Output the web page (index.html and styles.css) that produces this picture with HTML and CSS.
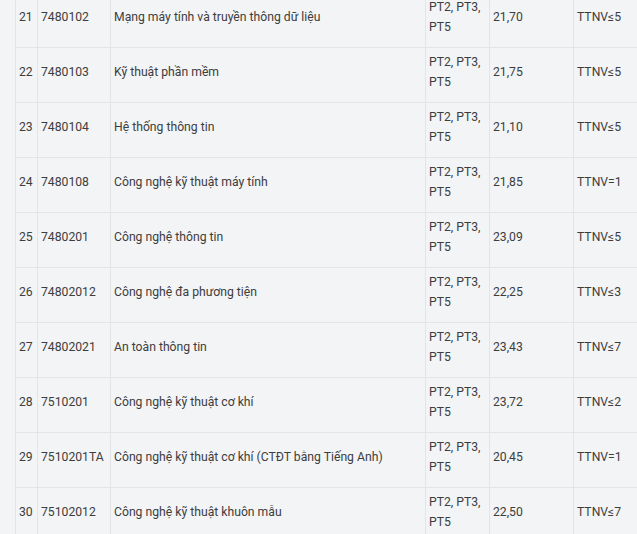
FILE: index.html
```
<!DOCTYPE html>
<html lang="vi">
<head>
<meta charset="utf-8">
<link rel="stylesheet" href="styles.css">
</head>
<body>
<div class="wrap">
<table class="scores">
<colgroup>
<col class="c-no"><col class="c-code"><col class="c-name"><col class="c-pt"><col class="c-score"><col class="c-tt">
</colgroup>
<tbody>
<tr><td>21</td><td>7480102</td><td>Mạng máy tính và truyền thông dữ liệu</td><td>PT2, PT3, PT5</td><td>21,70</td><td>TTNV≤5</td></tr>
<tr><td>22</td><td>7480103</td><td>Kỹ thuật phần mềm</td><td>PT2, PT3, PT5</td><td>21,75</td><td>TTNV≤5</td></tr>
<tr><td>23</td><td>7480104</td><td>Hệ thống thông tin</td><td>PT2, PT3, PT5</td><td>21,10</td><td>TTNV≤5</td></tr>
<tr><td>24</td><td>7480108</td><td>Công nghệ kỹ thuật máy tính</td><td>PT2, PT3, PT5</td><td>21,85</td><td>TTNV=1</td></tr>
<tr><td>25</td><td>7480201</td><td>Công nghệ thông tin</td><td>PT2, PT3, PT5</td><td>23,09</td><td>TTNV≤5</td></tr>
<tr><td>26</td><td>74802012</td><td>Công nghệ đa phương tiện</td><td>PT2, PT3, PT5</td><td>22,25</td><td>TTNV≤3</td></tr>
<tr><td>27</td><td>74802021</td><td>An toàn thông tin</td><td>PT2, PT3, PT5</td><td>23,43</td><td>TTNV≤7</td></tr>
<tr><td>28</td><td>7510201</td><td>Công nghệ kỹ thuật cơ khí</td><td>PT2, PT3, PT5</td><td>23,72</td><td>TTNV≤2</td></tr>
<tr><td>29</td><td>7510201TA</td><td>Công nghệ kỹ thuật cơ khí (CTĐT bằng Tiếng Anh)</td><td>PT2, PT3, PT5</td><td>20,45</td><td>TTNV=1</td></tr>
<tr><td>30</td><td>75102012</td><td>Công nghệ kỹ thuật khuôn mẫu</td><td>PT2, PT3, PT5</td><td>22,50</td><td>TTNV≤7</td></tr>
</tbody>
</table>
</div>
</body>
</html>
```
FILE: styles.css
```
html, body {
  margin: 0;
  padding: 0;
  background: #f3f4f6;
}
body {
  font-family: Roboto, "Noto Sans", sans-serif;
  color: #3d3d3d;
  font-size: 12.2px;
  overflow: hidden;
}
.wrap {
  padding-left: 15px;
  margin-top: -8px;
}
.scores {
  border-collapse: collapse;
  table-layout: fixed;
  width: 660px;
}
.c-no { width: 22px; }
.c-code { width: 73px; }
.c-name { width: 315px; }
.c-pt { width: 64px; }
.c-score { width: 84px; }
.c-tt { width: 102px; }
.scores td {
  border: 1px solid #e2e4e8;
  padding: 4px 3px 10px 3px;
  height: 39px;
  line-height: 20px;
  vertical-align: middle;
  white-space: nowrap;
}
.scores td:nth-child(4) {
  white-space: normal;
}
```
